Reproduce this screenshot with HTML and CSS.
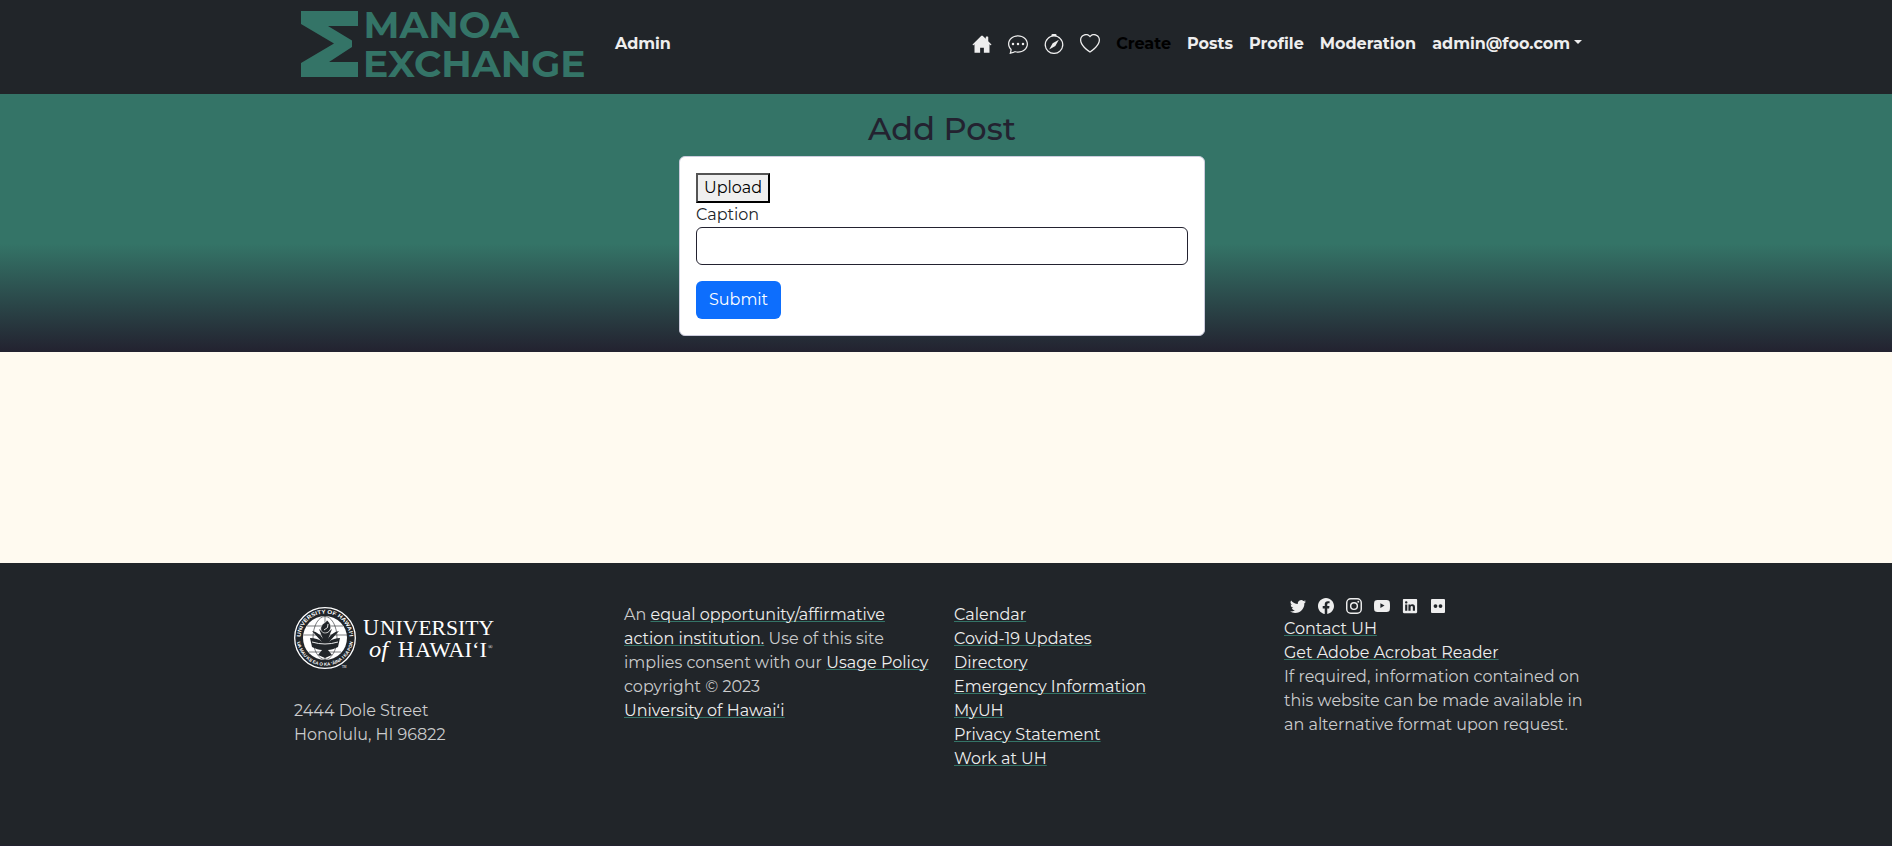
FILE: index.html
```html
<!DOCTYPE html>
<html lang="en">
<head>
<meta charset="utf-8">
<title>Manoa Exchange</title>
<link rel="stylesheet" href="styles.css">
</head>
<body>
<header class="navbar">
  <div class="container nav-row">
    <svg class="brand" width="284" height="68" viewBox="0 0 284 68">
      <path d="M0 0H57V15H27L51 29.500V36L28 51H57V66H0V52L33 32.500L0 13Z"/>
      <text x="62.500" y="27" textLength="155.500" lengthAdjust="spacingAndGlyphs">MANOA</text>
      <text x="62" y="66" textLength="222.500" lengthAdjust="spacingAndGlyphs">EXCHANGE</text>
    </svg>
    <a class="nav-link admin">Admin</a>
    <nav class="links">
      <svg class="ni" viewBox="0 0 16 16"><path d="M8.707 1.500a1 1 0 0 0-1.414 0L.646 8.146a.5.5 0 0 0 .708.708L2 8.207V15h4.500v-4h3v4H14V8.207l.646.647a.5.5 0 0 0 .708-.708L13 5.793V2.500a.5.5 0 0 0-.5-.5h-1a.5.5 0 0 0-.5.5v1.293L8.707 1.500Z"/></svg>
      <svg class="ni" viewBox="0 0 16 16"><path d="M5 8a1 1 0 1 1-2 0 1 1 0 0 1 2 0zm4 0a1 1 0 1 1-2 0 1 1 0 0 1 2 0zm3 1a1 1 0 1 0 0-2 1 1 0 0 0 0 2z"/><path d="m2.165 15.803.02-.004c1.830-.363 2.948-.842 3.468-1.105A9.060 9.060 0 0 0 8 15c4.418 0 8-3.134 8-7s-3.582-7-8-7-8 3.134-8 7c0 1.760.743 3.370 1.970 4.600a10.437 10.437 0 0 1-.524 2.318l-.003.011a10.722 10.722 0 0 1-.244.637c-.079.186.074.394.273.362a21.673 21.673 0 0 0 .693-.125zm.8-3.108a1 1 0 0 0-.287-.801C1.618 10.830 1 9.468 1 8c0-3.192 3.004-6 7-6s7 2.808 7 6c0 3.193-3.004 6-7 6a8.060 8.060 0 0 1-2.088-.272 1 1 0 0 0-.711.074c-.387.196-1.240.570-2.634.893a10.970 10.970 0 0 0 .398-2z"/></svg>
      <svg class="ni" viewBox="0 0 16 16"><path d="M8 16.016a7.500 7.500 0 0 0 1.962-14.740A1 1 0 0 0 9 0H7a1 1 0 0 0-.962 1.276A7.500 7.500 0 0 0 8 16.016zm6.500-7.500a6.500 6.500 0 1 1-13 0 6.500 6.500 0 0 1 13 0z"/><path d="m6.940 7.440 4.950-2.830-2.830 4.950-4.949 2.830 2.828-4.950z"/></svg>
      <svg class="ni" viewBox="0 0 16 16"><path d="m8 2.748-.717-.737C5.600.281 2.514.878 1.400 3.053c-.523 1.023-.641 2.500.314 4.385.92 1.815 2.834 3.989 6.286 6.357 3.452-2.368 5.365-4.542 6.286-6.357.955-1.886.838-3.362.314-4.385C13.486.878 10.400.280 8.717 2.010L8 2.748zM8 15C-7.333 4.868 3.279-3.040 7.824 1.143c.06.055.119.112.176.171a3.120 3.120 0 0 1 .176-.17C12.720-3.042 23.333 4.867 8 15z"/></svg>
      <a class="nav-link create">Create</a>
      <a class="nav-link">Posts</a>
      <a class="nav-link">Profile</a>
      <a class="nav-link">Moderation</a>
      <a class="nav-link user">admin@foo.com</a><i class="caret"></i>
    </nav>
  </div>
</header>
<main>
  <section class="hero">
    <h2>Add Post</h2>
    <form class="card">
      <button type="button" class="upload">Upload</button>
      <label for="caption">Caption</label>
      <input id="caption" type="text">
      <button type="button" class="submit">Submit</button>
    </form>
  </section>
</main>
<footer>
  <div class="container cols">
    <div class="col">
      <svg class="uh" width="200" height="62" viewBox="0 0 200 62">
        <circle cx="31" cy="31" r="30.300" fill="#212529" stroke="#fff" stroke-width="1.300"/>
        <circle cx="31" cy="31" r="22" fill="#fff"/>
        <defs><path id="arcTop" d="M6.500 31a24.500 24.500 0 0 1 49 0"/><path id="arcBot" d="M3 34a28.200 28.200 0 0 0 56 0"/></defs>
        <text class="seal"><textPath href="#arcTop" startOffset="1" textLength="74" lengthAdjust="spacingAndGlyphs">UNIVERSITY OF HAWAIʻI</textPath></text>
        <text class="seal small"><textPath href="#arcBot" startOffset="1" textLength="83" lengthAdjust="spacingAndGlyphs">UA MAU KE EA O KA ʻĀINA I KA PONO</textPath></text>
        <g fill="none" stroke="#212529" stroke-width=".6"><ellipse cx="31" cy="31" rx="12" ry="21.500"/><path d="M31 9V53M9.500 28H53M13 19H49M15 45H47"/></g>
        <path fill="#212529" d="M16 31c5 0 9 1 12 4L18 24c5 1 9 4 11 8l-4-10 5 4h3l5-4-4 10c2-4 6-7 11-8L35 35c3-3 7-4 11-4l-2 9c-4 2-7 3-10 3l4 5-7 3-7-3 4-5c-3 0-6-1-10-3z"/>
        <path fill="#212529" stroke="#fff" stroke-width=".6" d="M33 13c3 3 5 6 3 10-1 2-3 3-5 3-3 0-5-3-4-6 1-4 5-4 6-7z"/>
        <path d="M18 35q13 4 26 0M30 23q5-2 4-6" fill="none" stroke="#fff" stroke-width=".9"/>
        <g class="wordmark">
          <text x="69" y="28" font-size="24" textLength="16" lengthAdjust="spacingAndGlyphs">U</text><text x="86" y="28" font-size="20" textLength="114" lengthAdjust="spacingAndGlyphs">NIVERSITY</text>
          <text x="75" y="50" font-size="24" font-style="italic" textLength="19" lengthAdjust="spacingAndGlyphs">of</text>
          <text x="104" y="50" font-size="24" textLength="16" lengthAdjust="spacingAndGlyphs">H</text><text x="121" y="50" font-size="20" textLength="72" lengthAdjust="spacingAndGlyphs">AWAIʻI</text>
          <text x="194" y="42" font-size="6">®</text><text x="48" y="61" font-size="3">TM</text>
        </g>
      </svg>
      <p class="address"><span class="l">2444 Dole Street</span><span class="l">Honolulu, HI 96822</span></p>
    </div>
    <div class="col pt">
      <span class="l">An <a>equal opportunity/affirmative</a></span>
      <span class="l"><a>action institution.</a> Use of this site</span>
      <span class="l">implies consent with our <a>Usage Policy</a></span>
      <span class="l">copyright © 2023</span>
      <span class="l"><a>University of Hawaiʻi</a></span>
    </div>
    <div class="col pt">
      <span class="l"><a>Calendar</a></span>
      <span class="l"><a>Covid-19 Updates</a></span>
      <span class="l"><a>Directory</a></span>
      <span class="l"><a>Emergency Information</a></span>
      <span class="l"><a>MyUH</a></span>
      <span class="l"><a>Privacy Statement</a></span>
      <span class="l"><a>Work at UH</a></span>
    </div>
    <div class="col">
      <div class="social">
        <svg viewBox="0 0 16 16"><path d="M5.026 15c6.038 0 9.341-5.003 9.341-9.334 0-.140 0-.282-.006-.422A6.685 6.685 0 0 0 16 3.542a6.658 6.658 0 0 1-1.889.518 3.301 3.301 0 0 0 1.447-1.817 6.533 6.533 0 0 1-2.087.793A3.286 3.286 0 0 0 7.875 6.030a9.325 9.325 0 0 1-6.767-3.429 3.289 3.289 0 0 0 1.018 4.382A3.323 3.323 0 0 1 .640 6.575v.045a3.288 3.288 0 0 0 2.632 3.218 3.203 3.203 0 0 1-.865.115 3.230 3.230 0 0 1-.614-.057 3.283 3.283 0 0 0 3.067 2.277A6.588 6.588 0 0 1 .780 13.580a6.320 6.320 0 0 1-.780-.045A9.344 9.344 0 0 0 5.026 15z"/></svg>
        <svg viewBox="0 0 16 16"><path d="M16 8.049c0-4.446-3.582-8.050-8-8.050C3.580 0-.002 3.603-.002 8.050c0 4.017 2.926 7.347 6.750 7.951v-5.625h-2.030V8.050H6.750V6.275c0-2.017 1.195-3.131 3.022-3.131.876 0 1.791.157 1.791.157v1.980h-1.009c-.993 0-1.303.621-1.303 1.258v1.510h2.218l-.354 2.326H9.250V16c3.824-.604 6.750-3.934 6.750-7.951z"/></svg>
        <svg viewBox="0 0 16 16"><g fill="none" stroke="#eee" stroke-width="1.450"><rect x=".75" y=".75" width="14.500" height="14.500" rx="4"/><circle cx="8" cy="8" r="3.350"/></g><circle cx="12.270" cy="3.730" r=".96"/></svg>
        <svg viewBox="0 0 16 16"><path fill-rule="evenodd" d="M8 2C4 2 2 2.100 1.350 2.500.200 3 0 4.500 0 8s.2 5 1.350 5.500C2 13.900 4 14 8 14s6-.1 6.650-.5C15.800 13 16 11.500 16 8s-.2-5-1.350-5.500C14 2.100 12 2 8 2zM6.400 5.200v4.800L10.550 7.600z"/></svg>
        <svg viewBox="0 0 16 16"><path d="M0 1.146C0 .513.526 0 1.175 0h13.650C15.474 0 16 .513 16 1.146v13.708c0 .633-.526 1.146-1.175 1.146H1.175C.526 16 0 15.487 0 14.854V1.146zm4.943 12.248V6.169H2.542v7.225h2.401zm-1.200-8.212c.837 0 1.358-.554 1.358-1.248-.015-.709-.520-1.248-1.342-1.248-.822 0-1.359.540-1.359 1.248 0 .694.521 1.248 1.327 1.248h.016zm4.908 8.212V9.359c0-.216.016-.432.080-.586.173-.431.568-.878 1.232-.878.869 0 1.216.662 1.216 1.634v3.865h2.401V9.250c0-2.220-1.184-3.252-2.764-3.252-1.274 0-1.845.700-2.165 1.193v.025h-.016l.016-.025V6.169h-2.400c.030.678 0 7.225 0 7.225h2.400z" transform="translate(.9 .9) scale(.89)"/></svg>
        <svg viewBox="0 0 16 16"><path fill-rule="evenodd" d="M2 1h12q1 0 1 1v12q0 1-1 1H2q-1 0-1-1V2q0-1 1-1zM5.500 6.200a1.900 1.900 0 1 0 0 3.800 1.900 1.900 0 0 0 0-3.800zm5 0a1.900 1.900 0 1 0 0 3.800 1.900 1.900 0 0 0 0-3.800z"/></svg>
      </div>
      <span class="l"><a>Contact UH</a></span>
      <span class="l"><a>Get Adobe Acrobat Reader</a></span>
      <span class="l">If required, information contained on</span>
      <span class="l">this website can be made available in</span>
      <span class="l">an alternative format upon request.</span>
    </div>
  </div>
</footer>
</body>
</html>
```
FILE: styles.css
```css
* { box-sizing: border-box; }
body { margin: 0; background: #fffaf0; color: #212529; font: 16px/24px Montserrat, Inter, sans-serif; }
.container { width: 1296px; margin-left: 294px; }
.navbar { height: 94px; background: #212529; }
.nav-row { display: flex; align-items: flex-start; }
.brand { margin: 11px 0 0 7px; fill: #347467; flex: none; overflow: visible; font: 700 37px Montserrat, Inter, sans-serif; }
.nav-link { color: #eee; font-weight: 700; white-space: nowrap; }
.admin { margin: 32px 0 0 30px; }
.links { display: flex; align-items: center; height: 24px; margin: 32px 8px 0 auto; }
.links .nav-link { margin-right: 16px; }
.ni { width: 20px; height: 20px; margin-right: 16px; fill: #eee; }
.links .create { color: #000; }
.links .user { margin-right: 4px; }
.caret { border: 4.800px solid transparent; border-top-color: #eee; border-bottom: 0; margin-top: -5px; }
.hero { height: 258px; padding: 16px 8px 0 0; display: flex; flex-direction: column; align-items: center; background: linear-gradient(#347467 58%, #232230); }
h2 { margin: 0 0 8px; font-size: 32px; font-weight: 500; line-height: 38px; color: #232230; }
.card { width: 526px; height: 180px; padding: 16px; background: #fff; border: 1px solid #ccd; border-radius: 6px; display: flex; flex-direction: column; align-items: flex-start; }
button { font: inherit; }
.upload { width: 74px; height: 30px; padding: 1px 0; border: 2px outset #000; background: #efefef; color: #000; border-radius: 0; }
#caption { width: 100%; height: 38px; border: 1px solid #232230; border-radius: 6px; background: #fff; margin-bottom: 16px; }
.submit { width: 85px; height: 38px; background: #0d6efd; color: #fff; border: 0; border-radius: 6px; padding: 0; }
footer { margin-top: 211px; height: 283px; background: #212529; color: #cbcccd; padding-top: 32px; border-bottom: 1px solid #232230; }
.cols { display: grid; grid-template-columns: repeat(4, 330px); }
.pt { padding-top: 8px; }
.l { display: block; white-space: nowrap; height: 24px; }
.l a { color: #eee; text-decoration: underline 1px #347467; text-underline-offset: 1px; }
.uh { display: block; margin-top: 12px; }
.address { margin: 30px 0 0; }
.seal { font: 700 5.500px "Liberation Sans", sans-serif; fill: #fff; }
.seal.small { font-size: 4.500px; }
.wordmark { fill: #fff; font-family: "Liberation Serif", serif; }
.social { display: flex; gap: 12px; height: 22px; padding: 3px 0 0 6px; }
.social svg { width: 16px; height: 16px; fill: #eee; }
```
